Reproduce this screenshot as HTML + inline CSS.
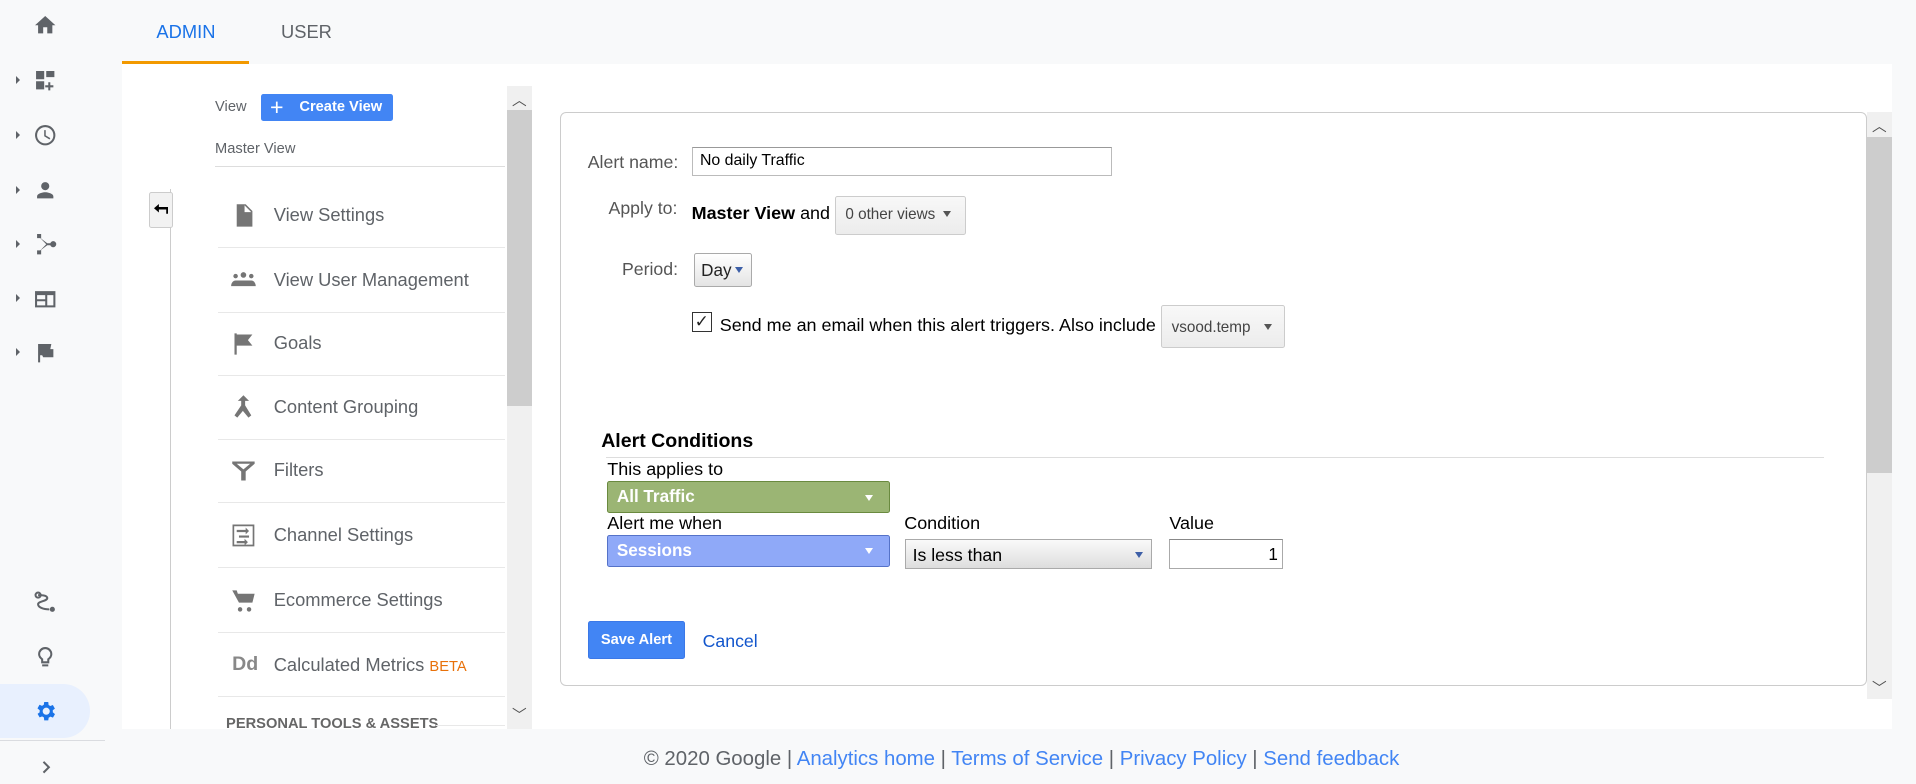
<!DOCTYPE html>
<html><head><meta charset="utf-8"><style>
html,body{margin:0;padding:0;width:1916px;height:784px;overflow:hidden;background:#f8f9fa}
#w{zoom:1.22194;width:1568px;height:642px;position:relative;font-family:"Liberation Sans",Arial,sans-serif;color:#5f6368}
.a{position:absolute}
.nav svg{position:absolute;left:27px;width:20px;height:20px;fill:#5f6368}
.tri{position:absolute;left:13px;width:0;height:0;border-top:4px solid transparent;border-bottom:4px solid transparent;border-left:4px solid #5f6368}
.mi{position:absolute;left:178px;width:235px;height:52px;border-bottom:1px solid #e8e8e8}
.mi span{position:absolute;left:46px;top:17px;font-size:15px;color:#5f6368}
.mi svg{position:absolute;left:10px;top:15px;width:22px;height:22px;fill:#757575}
.f{font-size:14.7px;color:#000}
.lbl{color:#555;font-size:14.5px}
.dd{position:absolute;background:linear-gradient(#f8f8f8,#ececec);border:1px solid #ccc;border-radius:2px;font-size:12.5px;color:#444}
.car{position:absolute;width:0;height:0;border-left:4px solid transparent;border-right:4px solid transparent;border-top:5px solid #555}
</style></head><body><div id="w">
<div class="nav">
<svg style="top:11px" viewBox="0 0 24 24"><path d="M10 20v-6h4v6h5v-8h3L12 3 2 12h3v8z"/></svg>
<div class="tri" style="top:62px"></div>
<svg style="top:56px" viewBox="0 0 24 24"><path d="M3 3h8v8H3zM13 3h8v6h-8zM3 13h8v8H3zM15 14h2v3h3v2h-3v3h-2v-3h-3v-2h3z"/></svg>
<div class="tri" style="top:107px"></div>
<svg style="top:101px" viewBox="0 0 24 24"><path d="M12 2a10 10 0 100 20 10 10 0 000-20zm0 18a8 8 0 110-16 8 8 0 010 16zm.5-13H11v6l5.2 3.2.8-1.3-4.5-2.7z"/></svg>
<div class="tri" style="top:152px"></div>
<svg style="top:146px" viewBox="0 0 24 24"><path d="M12 12a4 4 0 100-8 4 4 0 000 8zm0 2c-2.7 0-8 1.3-8 4v2h16v-2c0-2.7-5.3-4-8-4z"/></svg>
<div class="tri" style="top:196px"></div>
<svg style="top:190px" viewBox="0 0 24 24"><path d="M4 2h4v4.5l6 4.5h3a3 3 0 110 2h-3l-6 4.5V22H4v-4h3.2L13 12 7.2 6H4z"/></svg>
<div class="tri" style="top:241px"></div>
<svg style="top:235px" viewBox="0 0 24 24"><path d="M2 4h20v16H2zm2 4v10h8v-4H4v-2h8V8zm10 0v10h6V8z"/></svg>
<div class="tri" style="top:285px"></div>
<svg style="top:279px" viewBox="0 0 24 24"><path d="M5 3h13l-1 5 3 0v8H10l-1-2H7v7H5z"/></svg>
<svg style="top:483px" viewBox="0 0 24 24"><path fill="none" stroke="#5f6368" stroke-width="2" d="M5 5c3 0 9 0 9 3s-9 3-9 6 5 5 11 5"/><circle cx="5" cy="5" r="2.5" fill="none" stroke="#5f6368" stroke-width="2"/><circle cx="19" cy="19" r="2.5"/></svg>
<svg style="top:527px" viewBox="0 0 24 24"><path fill="none" stroke="#5f6368" stroke-width="2" d="M9 21h6M9 18h6V15c2-1.5 3-3 3-5a6 6 0 10-12 0c0 2 1 3.5 3 5z"/></svg>
<div class="a" style="left:0;top:560px;width:74px;height:44px;background:#e8f0fe;border-radius:0 22px 22px 0"></div>
<svg style="top:572px;fill:#1a73e8" viewBox="0 0 24 24"><path d="M19.4 13a7.5 7.5 0 000-2l2.1-1.6-2-3.5-2.5 1a7 7 0 00-1.7-1L15 3h-4l-.4 2.7a7 7 0 00-1.7 1l-2.5-1-2 3.5L6.6 11a7.5 7.5 0 000 2l-2.1 1.6 2 3.5 2.5-1a7 7 0 001.7 1L11 21h4l.4-2.7a7 7 0 001.7-1l2.5 1 2-3.5zM13 15.5a3.5 3.5 0 110-7 3.5 3.5 0 010 7z"/></svg>
<div class="a" style="left:0;top:606px;width:86px;border-top:1px solid #dadce0"></div>
<svg style="top:618px;left:28px" viewBox="0 0 24 24"><path d="M8.6 16.6L13.2 12 8.6 7.4 10 6l6 6-6 6z"/></svg>
</div>
<div class="a" style="left:128px;top:17px;font-size:15px;color:#1a73e8;font-weight:500">ADMIN</div>
<div class="a" style="left:230px;top:17px;font-size:15px;color:#5f6368">USER</div>
<div class="a" style="left:100px;top:52px;width:1448px;height:545px;background:#fff"></div>
<div class="a" style="left:100px;top:50px;width:104px;height:2px;background:#f29900"></div>
<div class="a" style="left:176px;top:81px;font-size:12px">View</div>
<div class="a" style="left:214px;top:77px;width:108px;height:22px;background:#4285f4;border-radius:2px;color:#fff;font-size:12px;font-weight:bold"><span class="a" style="left:7px;top:0px;font-size:19px;font-weight:normal;line-height:22px">+</span><span class="a" style="left:31px;top:4px">Create View</span></div>
<div class="a" style="left:176px;top:115px;font-size:12px">Master View</div>
<div class="a" style="left:176px;top:136px;width:237px;border-top:1px solid #ddd"></div>
<div class="a" style="left:139px;top:155px;height:442px;border-left:1px solid #ccc"></div>
<div class="a" style="left:122px;top:157px;width:18px;height:28px;background:#f2f2f2;border:1px solid #ccc;border-radius:2px"><svg class="a" style="left:3px;top:9px" width="12" height="10" viewBox="0 0 12 10"><path d="M0 3.5L4 0v2.5h8V8h-2V4.5H4V7z" fill="#000"/></svg></div>
<div class="mi" style="top:150px"><svg viewBox="0 0 24 24"><path d="M6 2h8l6 6v14H6zm7 1v6h6"/></svg><span>View Settings</span></div>
<div class="mi" style="top:203px"><svg viewBox="0 0 24 24"><circle cx="12" cy="8" r="2.5"/><circle cx="5" cy="9" r="2"/><circle cx="19" cy="9" r="2"/><path d="M1 18c0-3 2-5 4-5h14c2 0 4 2 4 5z"/></svg><span>View User Management</span></div>
<div class="mi" style="top:255px"><svg viewBox="0 0 24 24"><path d="M4 3h2v19H4zM6 4h14l-4 5 4 5H6z"/></svg><span>Goals</span></div>
<div class="mi" style="top:307px"><svg viewBox="0 0 24 24"><path d="M12 2l5 5h-3.5v4L19 20l-2.5 2-5-6-5 6L4 20l6-9V7H7z"/></svg><span>Content Grouping</span></div>
<div class="mi" style="top:359px"><svg viewBox="0 0 24 24"><path d="M2 4h20v2l-8 7v8h-4v-8L2 6zm4 2l6 5 6-5z"/></svg><span>Filters</span></div>
<div class="mi" style="top:412px"><svg viewBox="0 0 24 24"><path fill="none" stroke="#757575" stroke-width="1.5" d="M3 3h18v18H3z"/><path d="M6 7h8V5l3 3-3 3V9H6zM8 12h9v2H8zM6 17h7v-2l3 3-3 3v-2H6z"/></svg><span>Channel Settings</span></div>
<div class="mi" style="top:465px"><svg viewBox="0 0 24 24"><path d="M2 3h4l1 3h15l-2 8H8zm5 17a2 2 0 104 0 2 2 0 00-4 0zm8 0a2 2 0 104 0 2 2 0 00-4 0z"/></svg><span>Ecommerce Settings</span></div>
<div class="mi" style="top:518px"><span style="left:12px;font-weight:bold;color:#888;font-size:16px;top:16px">Dd</span><span>Calculated Metrics <b style="font-weight:normal;color:#e8710a;font-size:12px">BETA</b></span></div>
<div class="a" style="left:185px;top:586px;font-size:12px;font-weight:bold;color:#666;height:11px;overflow:hidden">PERSONAL TOOLS &amp; ASSETS</div>
<div class="a" style="left:357px;top:593px;width:56px;border-top:1px solid #e8e8e8"></div>
<div class="a" style="left:415px;top:70px;width:20px;height:527px;background:#f0f0f0"></div>
<div class="a" style="left:415px;top:90px;width:20px;height:242px;background:#cdcdcd"></div>
<div class="a" style="left:419px;top:73px;font-size:12px;color:#505050">︿</div>
<div class="a" style="left:419px;top:576px;font-size:12px;color:#505050">﹀</div>
<div class="a" style="left:458px;top:92px;width:1068px;height:468px;border:1px solid #ccc;border-radius:5px"></div>
<div class="a" style="left:1528px;top:92px;width:20px;height:480px;background:#f0f0f0"></div>
<div class="a" style="left:1528px;top:112px;width:20px;height:275px;background:#cdcdcd"></div>
<div class="a" style="left:1532px;top:94px;font-size:12px;color:#505050">︿</div>
<div class="a" style="left:1532px;top:554px;font-size:12px;color:#505050">﹀</div>
<div class="a lbl" style="left:481px;top:124px">Alert name:</div>
<div class="a f" style="left:566px;top:120px;width:336px;height:22px;border:1px solid #bbb;border-top-color:#999;padding-left:6px;line-height:22px;font-size:13px">No daily Traffic</div>
<div class="a lbl" style="left:498px;top:162px">Apply to:</div>
<div class="a f" style="left:566px;top:166px;font-weight:bold">Master View <span style="font-weight:normal">and</span></div>
<div class="dd" style="left:683px;top:160px;width:106px;height:31px"><span class="a" style="left:8px;top:8px">0 other views</span><div class="car" style="left:88px;top:12px"></div></div>
<div class="a lbl" style="left:509px;top:212px">Period:</div>
<div class="dd" style="left:568px;top:207px;width:46px;height:26px;background:linear-gradient(#fff,#e4e4e4);border-color:#aaa"><span class="a" style="left:5px;top:6px;font-size:14px;color:#222">Day</span><div class="car" style="left:33px;top:11px;border-top-color:#3d5fa7"></div></div>
<div class="a" style="left:566px;top:255px;width:15px;height:15px;border:1px solid #333;font-size:14px;line-height:14px;text-align:center;color:#222">✓</div>
<div class="a f" style="left:589px;top:258px">Send me an email when this alert triggers. Also include</div>
<div class="dd" style="left:950px;top:250px;width:100px;height:33px"><span class="a" style="left:8px;top:10px">vsood.temp</span><div class="car" style="left:84px;top:14px"></div></div>
<div class="a" style="left:492px;top:352px;font-size:16px;font-weight:bold;color:#000">Alert Conditions</div>
<div class="a" style="left:496px;top:374px;width:997px;border-top:1px solid #ddd"></div>
<div class="a f" style="left:497px;top:376px">This applies to</div>
<div class="a" style="left:497px;top:394px;width:230px;height:24px;background:#9bb574;border:1px solid #6a8a3f;border-radius:2px;color:#fff;font-weight:bold;font-size:14px"><span class="a" style="left:7px;top:4px">All Traffic</span><div class="car" style="left:210px;top:10px;border-top-color:#fff"></div></div>
<div class="a f" style="left:497px;top:420px">Alert me when</div>
<div class="a" style="left:497px;top:438px;width:230px;height:24px;background:#8fa9f8;border:1px solid #5572c8;border-radius:2px;color:#fff;font-weight:bold;font-size:14px"><span class="a" style="left:7px;top:4px">Sessions</span><div class="car" style="left:210px;top:10px;border-top-color:#fff"></div></div>
<div class="a f" style="left:740px;top:420px">Condition</div>
<div class="a" style="left:741px;top:441px;width:200px;height:23px;border:1px solid #aaa;background:linear-gradient(#fafafa,#ddd);font-size:14.5px;color:#000"><span class="a" style="left:5px;top:4px">Is less than</span><div class="car" style="left:187px;top:10px;border-top-color:#3d5fa7"></div></div>
<div class="a f" style="left:957px;top:420px">Value</div>
<div class="a" style="left:957px;top:441px;width:91px;height:23px;border:1px solid #aaa;border-top-color:#888;font-size:14px;color:#000;text-align:right;line-height:24px"><span style="padding-right:3px">1</span></div>
<div class="a" style="left:481px;top:508px;width:78px;height:30px;background:#4285f4;border:1px solid #3b78e7;border-radius:2px;color:#fff;font-size:12px;font-weight:bold;text-align:center;line-height:30px">Save Alert</div>
<div class="a" style="left:575px;top:516px;font-size:14.5px;color:#15c">Cancel</div>
<div class="a" style="left:0;top:612px;width:1672px;text-align:center;font-size:16.7px;color:#5f6368">© 2020 Google | <span style="color:#4285f4">Analytics home</span> | <span style="color:#4285f4">Terms of Service</span> | <span style="color:#4285f4">Privacy Policy</span> | <span style="color:#4285f4">Send feedback</span></div>
</div></body></html>
